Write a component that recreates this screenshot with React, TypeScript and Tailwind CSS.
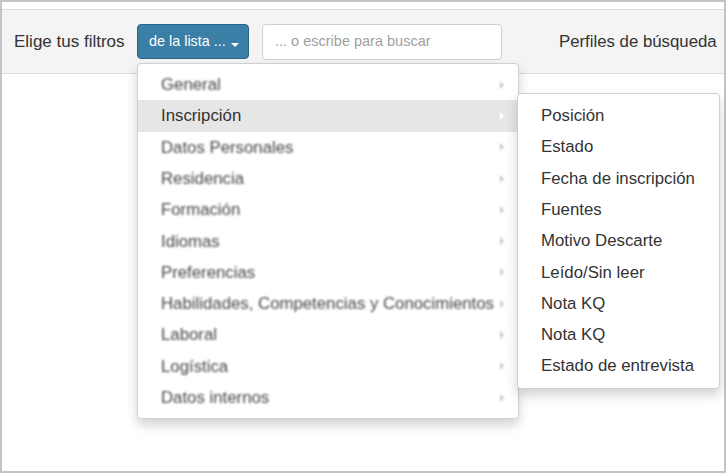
const groups = [
  "General",
  "Inscripción",
  "Datos Personales",
  "Residencia",
  "Formación",
  "Idiomas",
  "Preferencias",
  "Habilidades, Competencias y Conocimientos",
  "Laboral",
  "Logística",
  "Datos internos",
];

const fields = [
  "Posición",
  "Estado",
  "Fecha de inscripción",
  "Fuentes",
  "Motivo Descarte",
  "Leído/Sin leer",
  "Nota KQ",
  "Nota KQ",
  "Estado de entrevista",
];

function Chevron({ active }: { active?: boolean }) {
  return (
    <span
      className={
        active
          ? "h-0 w-0 border-y-[4px] border-l-[4px] border-y-transparent border-l-white"
          : "h-0 w-0 border-y-[4px] border-l-[4px] border-y-transparent border-l-[#c8c8c8]"
      }
    />
  );
}

export default function App() {
  return (
    <div className="h-[473px] w-[726px] border-2 border-[#c4c4c4] bg-white font-['Liberation_Sans',Arial,sans-serif] text-[16.8px] text-[#333]">
      <div className="h-[7px]" />
      <div className="relative flex h-[65px] items-center border-y border-[#dcdcdc] bg-[#f4f4f4] pl-3">
        <span className="w-[110px] whitespace-nowrap text-[17px]">Elige tus filtros</span>
        <div className="relative ml-[13px]">
          <button className="flex h-[35px] w-[112px] items-center rounded-[4px] border border-[#2b6586] bg-[#3a80a6] pl-[11px] text-[14.4px] text-white">
            de la lista ...
            <span className="ml-[5px] mt-[6px] h-0 w-0 border-x-[4px] border-t-[4px] border-x-transparent border-t-white" />
          </button>

          <div className="absolute left-0 top-[39px] z-10 w-[382px] rounded-[4px] border border-[#d0d0d0] bg-white py-[5px] shadow-[0_6px_12px_rgba(0,0,0,0.18)]">
            {groups.map((g) =>
              g === "Inscripción" ? (
                <div key={g} className="flex h-[31.3px] items-center justify-between bg-[#e6e6e6] pl-[23px] pr-[14px] text-[#333]">
                  <span>{g}</span>
                  <Chevron active />
                </div>
              ) : (
                <div key={g} className="flex h-[31.3px] items-center justify-between pl-[23px] pr-[14px] text-[#474747] blur-[1px]">
                  <span className="whitespace-nowrap">{g}</span>
                  <Chevron />
                </div>
              )
            )}
          </div>

          <div className="absolute left-[380px] top-[69px] z-20 w-[203px] rounded-[4px] border border-[#d0d0d0] bg-white py-[6px] shadow-[0_6px_12px_rgba(0,0,0,0.18)]">
            {fields.map((f, i) => (
              <div key={i} className="flex h-[31.3px] items-center pl-[23px] text-[#333]">
                {f}
              </div>
            ))}
          </div>
        </div>
        <div className="ml-[13px] flex h-[36px] w-[240px] items-center rounded-[4px] border border-[#cfcfcf] bg-white pl-[12px] text-[14.5px] text-[#a0a0a0]">
          ... o escribe para buscar
        </div>
        <span className="ml-[57px] whitespace-nowrap">Perfiles de búsqueda</span>
      </div>
    </div>
  );
}
